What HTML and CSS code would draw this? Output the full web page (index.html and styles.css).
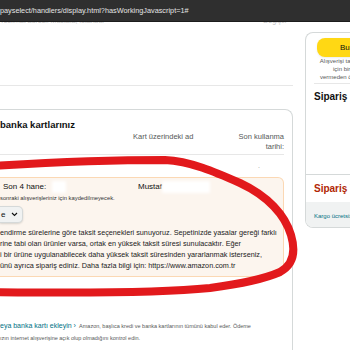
FILE: index.html
```html
<!DOCTYPE html>
<html lang="tr">
<head>
    <meta charset="UTF-8">
    <meta name="viewport" content="width=device-width, initial-scale=1.0">
    <title>Ödeme yöntemi seçin</title>
    <link rel="stylesheet" href="styles.css">
</head>
<body>
    <div class="urlbar">payselect/handlers/display.html?hasWorkingJavascript=1#</div>

    <div class="page">
        <div class="main">
            <div class="addr-row">
                <span>Teslimat adresi: Mustafa, İstanbul</span>
                <span class="change">Değiştir</span>
            </div>
            <div class="divider"></div>

            <div class="card">
                <h2>banka kartlarınız</h2>
                <div class="thead">
                    <span class="col-name">Kart üzerindeki ad</span>
                    <span class="col-exp">Son kullanma<br>tarihi:</span>
                </div>
                <div class="row-empty"><span class="dot">.</span></div>

                <div class="selected">
                    <div class="sel-row">
                        <span class="last4">Son 4 hane: <i class="redact small"></i></span>
                        <span class="holder">Mustaf<i class="redact wide"></i></span>
                    </div>
                    <div class="note">sonraki alışverişleriniz için kaydedilmeyecek.</div>
                    <div class="select-btn">
                        <span>e</span>
                        <svg width="7" height="5" viewBox="0 0 7 5"><path d="M1 1 L3.5 3.5 L6 1" fill="none" stroke="#0f1111" stroke-width="1.1"/></svg>
                    </div>
                    <p class="info">
                        endirme sürelerine göre taksit seçenekleri sunuyoruz. Sepetinizde yasalar gereği farklı<br>
                        rine tabi olan ürünler varsa, ortak en yüksek taksit süresi sunulacaktır. Eğer<br>
                        i bir ürüne uygulanabilecek daha yüksek taksit süresinden yararlanmak isterseniz,<br>
                        ünü ayrıca sipariş ediniz. Daha fazla bilgi için: https://www.amazon.com.tr
                    </p>
                </div>

                <div class="add-card">
                    <a class="link">eya banka kartı ekleyin ›</a>
                    <span class="muted">Amazon, başlıca kredi ve banka kartlarının tümünü kabul eder. Ödeme</span><br>
                    <span class="muted">ızın internet alışverişine açık olup olmadığını kontrol edin.</span>
                </div>
            </div>
        </div>

        <div class="side">
            <div class="side-card">
                <div class="buy-btn">Bu ödeme yöntemini kullan</div>
                <p class="side-note">
                    Alışverişi tamamlamak ve siparişi<br>
                    için bir adres ve ödeme<br>
                    vermeden önce koşulları okuyun.
                </p>
                <div class="side-line"></div>
                <h3>Sipariş Özeti</h3>
                <div class="side-total">
                    <h3 class="total">Sipariş Toplamı</h3>
                    <div class="shipping">Kargo ücretsiz</div>
                </div>
            </div>
        </div>
    </div>

    <!-- hand drawn marker over the screenshot -->
    <svg class="scribble" width="350" height="350" viewBox="0 0 350 350">
        <path d="M -10 166 C 40 163, 120 160, 165 160 C 190 161, 215 172, 240 183 C 268 196, 285 215, 291 235 C 296 252, 293 265, 280 272 C 262 280, 240 284, 210 288 C 160 293, 60 293, -10 292"
              fill="none" stroke="#e2191c" stroke-width="8" stroke-linecap="round" stroke-linejoin="round"/>
    </svg>
</body>
</html>
```

FILE: styles.css
```css
:root {
    --text: #0f1111;
    --muted: #565959;
    --border: #d5d9d9;
    --line: #e7e7e7;
    --link: #007185;
    --price: #b12704;
    --selected-bg: #fcf5ee;
    --selected-border: #fbd8b4;
    --yellow: #ffd814;
}

* {
    margin: 0;
    padding: 0;
    box-sizing: border-box;
}

body {
    font-family: "Liberation Sans", Arial, sans-serif;
    color: var(--text);
    background: #fff;
    width: 350px;
    height: 350px;
    overflow: hidden;
    position: relative;
}

.urlbar {
    height: 22px;
    background: #2f2f2f;
    border-bottom: 1px solid #1c1c1c;
    color: #e4e4e4;
    font-size: 7.3px;
    line-height: 21px;
    white-space: nowrap;
}

.page {
    display: flex;
}

.main {
    width: 293px;
    flex: none;
}

.addr-row {
    height: 4px;
    overflow: hidden;
    display: flex;
    justify-content: space-between;
    padding-right: 6px;
    font-size: 7px;
    color: #c2c2c2;
}

.addr-row span {
    display: block;
    line-height: 8px;
    margin-top: -5px;
}

.divider {
    margin-top: 59px;
    height: 1px;
    background: var(--line);
}

.card {
    margin-top: 23px;
    border: 1px solid var(--border);
    border-left: 0;
    border-bottom: 0;
    border-radius: 0 8px 0 0;
    padding: 8px 8px 0 0;
    height: 250px;
}

.card h2 {
    font-size: 9.5px;
    line-height: 14px;
    font-weight: 700;
}

.thead {
    display: flex;
    font-size: 7.5px;
    line-height: 10px;
    color: var(--muted);
    padding-bottom: 2px;
    border-bottom: 1px solid var(--line);
}

.col-name {
    margin-left: 133px;
}

.col-exp {
    margin-left: auto;
    text-align: right;
}

.row-empty {
    height: 22px;
    position: relative;
}

.row-empty .dot {
    position: absolute;
    left: 258px;
    top: 7px;
    font-size: 7px;
    color: #999;
}

.selected {
    background: var(--selected-bg);
    border: 1px solid var(--selected-border);
    border-left: 0;
    border-radius: 0 6px 6px 0;
    padding: 4px 8px 5px 0;
}

.sel-row {
    display: flex;
    font-size: 8px;
    line-height: 10px;
}

.last4 {
    width: 138px;
    padding-left: 3px;
}

.redact {
    display: inline-block;
    vertical-align: middle;
    background: #fff;
    box-shadow: 0 0 3px 2px #fff;
    height: 8px;
}

.redact.small {
    width: 10px;
    margin-left: 6px;
}

.redact.wide {
    width: 44px;
    margin-left: 2px;
}

.note {
    margin-top: 2px;
    font-size: 5.8px;
    line-height: 8px;
    color: #333;
}

.select-btn {
    margin-top: 4px;
    width: 23px;
    height: 17px;
    display: flex;
    align-items: center;
    justify-content: space-between;
    padding: 0 4px 0 1px;
    background: #f0f2f2;
    border: 1px solid var(--border);
    border-left: 0;
    border-radius: 0 5px 5px 0;
    box-shadow: 0 1px 2px rgba(15, 17, 17, 0.15);
    font-size: 8px;
}

.info {
    margin-top: 4px;
    font-size: 7.25px;
    line-height: 11px;
    white-space: nowrap;
    color: #222;
}

.add-card {
    margin-top: 43px;
    font-size: 5.5px;
    line-height: 12px;
    white-space: nowrap;
}

.add-card .link {
    color: var(--link);
    font-size: 7px;
    margin-right: 2px;
}

.add-card .muted {
    color: var(--muted);
}

.side {
    margin-left: 12px;
    padding-top: 10px;
    flex: none;
    width: 120px;
}

.side-card {
    border: 1px solid var(--border);
    border-right: 0;
    border-radius: 8px 0 0 8px;
    padding-top: 5px;
    overflow: hidden;
}

.buy-btn {
    margin-left: 11px;
    height: 19px;
    background: var(--yellow);
    border-radius: 8px 0 0 8px;
    padding-left: 23px;
    font-size: 8px;
    line-height: 19px;
    white-space: nowrap;
    box-shadow: 0 1px 2px rgba(213, 217, 217, 0.5);
}

.side-note {
    margin-left: 8px;
    width: 100px;
    text-align: center;
    font-size: 6px;
    line-height: 8px;
    color: var(--muted);
    white-space: nowrap;
}

.side-line {
    margin: 2px 0 0 8px;
    height: 1px;
    background: var(--line);
}

.side-card h3 {
    margin: 6px 0 0 8px;
    font-size: 10px;
    line-height: 14px;
    font-weight: 700;
    white-space: nowrap;
}

.side-total {
    margin-top: 70px;
    border-top: 1px solid var(--border);
}

.side-total .total {
    margin-top: 7px;
    color: var(--price);
}

.shipping {
    margin-top: 6px;
    height: 25px;
    background: #f0f2f2;
    padding: 10px 0 0 8px;
    font-size: 6px;
    line-height: 8px;
    color: var(--link);
    white-space: nowrap;
}

.scribble {
    position: absolute;
    left: 0;
    top: 0;
    pointer-events: none;
}
```
